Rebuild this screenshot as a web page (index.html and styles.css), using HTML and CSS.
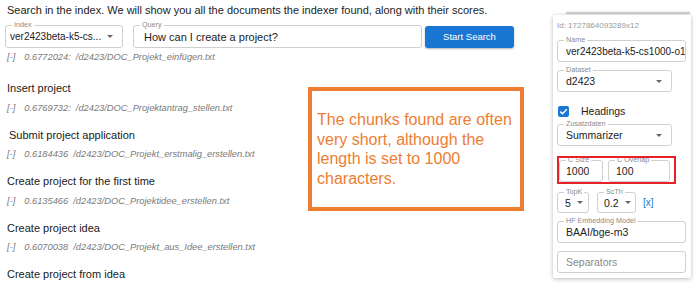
FILE: index.html
```html
<!DOCTYPE html>
<html>
<head>
<meta charset="utf-8">
<link rel="stylesheet" href="styles.css">
</head>
<body>
<div class="page">
  <div class="main">
    <p class="intro">Search in the index. We will show you all the documents the indexer found, along with their scores.</p>
    <div class="search">
      <div class="field f-index"><span class="lbl">Index</span><span class="val">ver2423beta-k5-cs...</span><span class="caret"></span></div>
      <div class="field f-query"><span class="lbl">Query</span><span class="val">How can I create a project?</span></div>
      <button class="btn">Start Search</button>
    </div>
    <div class="results">
      <div class="meta"><span class="tog">[-]</span><span class="score">0.6772024:</span><span>/d2423/DOC_Projekt_einfügen.txt</span></div>
      <div class="chunk first">Insert project</div>
      <div class="meta"><span class="tog">[-]</span><span class="score">0.6769732:</span><span>/d2423/DOC_Projektantrag_stellen.txt</span></div>
      <div class="chunk indent">Submit project application</div>
      <div class="meta"><span class="tog">[-]</span><span class="score">0.6184436</span><span>/d2423/DOC_Projekt_erstmalig_erstellen.txt</span></div>
      <div class="chunk">Create project for the first time</div>
      <div class="meta"><span class="tog">[-]</span><span class="score">0.6135466</span><span>/d2423/DOC_Projektidee_erstellen.txt</span></div>
      <div class="chunk">Create project idea</div>
      <div class="meta"><span class="tog">[-]</span><span class="score">0.6070038</span><span>/d2423/DOC_Projekt_aus_Idee_erstellen.txt</span></div>
      <div class="chunk">Create project from idea</div>
    </div>
    <div class="note"><p>The chunks found are often very short, although the length is set to 1000 characters.</p></div>
  </div>
  <aside class="side">
    <div class="edge"></div>
    <div class="card">
      <div class="id">Id: 1727864093289x12</div>
      <div class="field f-name"><span class="lbl">Name</span><span class="val">ver2423beta-k5-cs1000-o1</span></div>
      <div class="field f-dataset"><span class="lbl">Dataset</span><span class="val">d2423</span><span class="caret"></span></div>
      <label class="check"><span class="box"><svg viewBox="0 0 11 11" width="11" height="11"><path d="M2.3 5.6 L4.5 7.8 L8.8 3.3" fill="none" stroke="#fff" stroke-width="1.5"/></svg></span><span>Headings</span></label>
      <div class="field f-zusatz"><span class="lbl">Zusatzdaten</span><span class="val">Summarizer</span><span class="caret"></span></div>
      <div class="crow">
        <div class="field f-csize"><span class="lbl">C Size</span><span class="val">1000</span></div>
        <div class="field f-cover"><span class="lbl">C Overlap</span><span class="val">100</span></div>
        <div class="redframe"></div>
      </div>
      <div class="krow">
        <div class="field f-topk"><span class="lbl">TopK</span><span class="val">5</span><span class="caret inl"></span></div>
        <div class="field f-scth"><span class="lbl">ScTh</span><span class="val">0.2</span><span class="caret inl"></span></div>
        <span class="xlink">[x]</span>
      </div>
      <div class="field f-hf"><span class="lbl">HF Embedding Model</span><span class="val">BAAI/bge-m3</span></div>
      <div class="field f-sep"><span class="val ph">Separators</span></div>
    </div>
  </aside>
</div>
</body>
</html>
```
FILE: styles.css
```css
* { box-sizing: border-box; }
html, body { margin: 0; padding: 0; background: #fff; }
body { font-family: "Liberation Sans", Arial, sans-serif; color: #222; }
.page { display: flex; width: 700px; height: 287px; overflow: hidden; }
.main { flex: 1; position: relative; padding-left: 5px; }
.intro { margin: 3px 0 0 2px; font-size: 11px; line-height: 14px; color: #222; white-space: nowrap; }

.field { position: relative; display: flex; align-items: center; height: 22px; border: 1px solid #d0d0d0; border-radius: 3px; background: #fff; }
.lbl { position: absolute; top: -5px; left: 6px; padding: 0 2px; font-size: 7.2px; line-height: 8px; color: #8a8a8a; background: #fff; white-space: nowrap; }
.val { font-size: 10px; color: #222; white-space: nowrap; overflow: hidden; }
.val.ph { color: #8a8a8a; }
.caret { position: absolute; right: 9px; top: 9px; width: 0; height: 0; border-left: 3px solid transparent; border-right: 3px solid transparent; border-top: 3px solid #666; }
.caret.inl { position: static; margin-left: 6px; }

.search { display: flex; align-items: center; margin-top: 8px; height: 23px; }
.f-index { width: 118px; height: 23px; padding-left: 4px; }
.f-query { width: 289px; height: 23px; margin-left: 10px; padding-left: 10px; }
.f-query .val { font-size: 11px; }
.btn { margin-left: 3px; width: 89px; height: 22px; border: none; border-radius: 3px; background: #1976d2; color: #fff; font-family: "Liberation Sans", Arial, sans-serif; font-size: 9.5px; box-shadow: 0 1px 2px rgba(0,0,0,0.3); padding: 0; }

.results { margin-top: 3px; padding-left: 2px; }
.meta { font-size: 9.3px; line-height: 12px; font-style: italic; color: #7a7a7a; margin-top: 6.5px; white-space: nowrap; }
.meta:first-child { margin-top: 0; }
.tog { margin-right: 9px; }
.score { margin-right: 5px; }
.chunk { font-size: 11px; line-height: 14px; color: #1a1a1a; margin-top: 14px; white-space: nowrap; }
.chunk.first { margin-top: 18px; }
.chunk.indent { padding-left: 2px; }

.note { position: absolute; left: 308px; top: 87px; width: 216px; height: 124px; border: 4px solid #ed7d31; background: #fff; display: flex; align-items: center; padding: 0 2px 0 5px; }
.note p { margin: 0; font-size: 16px; line-height: 19.5px; color: #ed7d31; }

.side { width: 138px; margin-right: 9px; padding-top: 12px; flex: none; }
.edge { height: 2px; margin: 0 1px 0 13px; background: #cfcfcf; box-shadow: 0 0 2px rgba(0,0,0,0.2); }
.card { margin-top: 1px; height: 263px; background: #fff; box-shadow: 0 1px 4px rgba(0,0,0,0.28); border-radius: 2px; padding: 6px 5px 0 4px; }
.id { font-size: 8px; line-height: 10px; color: #999; }
.f-name { margin-top: 9px; padding-left: 8px; }
.f-dataset { margin-top: 8px; width: 115px; padding-left: 8px; }
.check { display: flex; align-items: center; margin-top: 12px; height: 14px; font-size: 10.5px; color: #222; }
.box { display: block; width: 11px; height: 11px; margin-left: 1px; margin-right: 12px; background: #1976d2; border-radius: 2px; }
.box svg { display: block; }
.f-zusatz { margin-top: 6px; width: 115px; padding-left: 8px; }
.f-zusatz .val, .f-hf .val, .f-sep .val, .f-csize .val, .f-cover .val, .f-topk .val, .f-scth .val, .f-dataset .val { font-size: 10.5px; }
.crow { position: relative; display: flex; margin-top: 14px; padding-left: 2px; }
.f-csize { width: 44px; padding-left: 6px; }
.f-cover { width: 62px; margin-left: 5px; padding-left: 7px; }
.redframe { position: absolute; left: 0; top: -4px; width: 119px; height: 28px; border: 2px solid #e8202a; }
.krow { display: flex; align-items: center; margin-top: 10px; }
.f-topk { width: 32px; height: 21px; padding-left: 7px; }
.f-scth { width: 39px; height: 21px; margin-left: 8px; padding-left: 6px; }
.xlink { margin-left: 7px; font-size: 10px; color: #1976d2; }
.f-hf { margin-top: 8px; padding-left: 8px; }
.f-sep { margin-top: 8px; padding-left: 8px; }
```
